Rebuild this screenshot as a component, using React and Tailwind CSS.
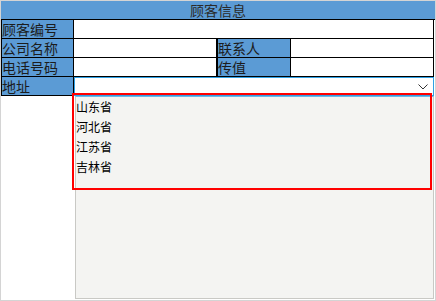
const cjk = { fontFamily: '"Noto Sans CJK SC", "Microsoft YaHei", sans-serif' }

function Label({ children, className = '' }) {
  return (
    <div className={`bg-[#5b9bd5] text-[14px] leading-[18px] text-[#1c1c1c] border-l border-black ${className}`}>
      {children}
    </div>
  )
}

export default function App() {
  const provinces = ['山东省', '河北省', '江苏省', '吉林省']

  return (
    <div className="relative w-[436px] h-[301px] bg-white border border-[#d4d4d4] overflow-hidden" style={cjk}>
      {/* title */}
      <div className="h-[19px] bg-[#5b9bd5] border-b border-black text-center text-[14px] leading-[18px] text-[#2a2a2a]">
        顾客信息
      </div>

      {/* rows */}
      <div className="flex h-[19px] border-b border-black w-[433px]">
        <Label className="w-[73px] border-r border-black">顾客编号</Label>
        <div className="flex-1 bg-white border-r border-black" />
      </div>
      <div className="flex h-[19px] border-b border-black w-[433px]">
        <Label className="w-[73px] border-r border-black">公司名称</Label>
        <div className="w-[143px] bg-white border-r border-black" />
        <Label className="w-[74px] border-r border-black">联系人</Label>
        <div className="flex-1 bg-white border-r border-black" />
      </div>
      <div className="flex h-[19px] border-b border-black w-[433px]">
        <Label className="w-[73px] border-r border-black">电话号码</Label>
        <div className="w-[143px] bg-white border-r border-black" />
        <Label className="w-[74px] border-r border-black">传值</Label>
        <div className="flex-1 bg-white border-r border-black" />
      </div>

      {/* address row */}
      <div className="flex h-[19px] w-[433px]">
        <Label className="w-[73px] border-b border-r border-black">地址</Label>
        <div className="flex-1 flex items-center justify-end bg-white border border-[#2fa0e4] pr-[5px]">
          <svg width="10" height="6" viewBox="0 0 10 6" fill="none">
            <path d="M0.5 0.5 L5 5 L9.5 0.5" stroke="#333" strokeWidth="1" />
          </svg>
        </div>
      </div>

      {/* dropdown list */}
      <div className="flex">
        <div className="w-[74px]" />
        <div className="w-[359px] h-[203px] bg-[#f4f4f2] border border-[#c9c9c5] border-t-[#6fb6e6] text-[12px] text-black">
          {provinces.map((p) => (
            <div key={p} className="h-[20px] leading-[20px]">
              {p}
            </div>
          ))}
        </div>
      </div>

      {/* annotation */}
      <div className="absolute left-[71px] top-[92px] w-[360px] h-[97px] border-2 border-[#ff0000]" />
    </div>
  )
}
